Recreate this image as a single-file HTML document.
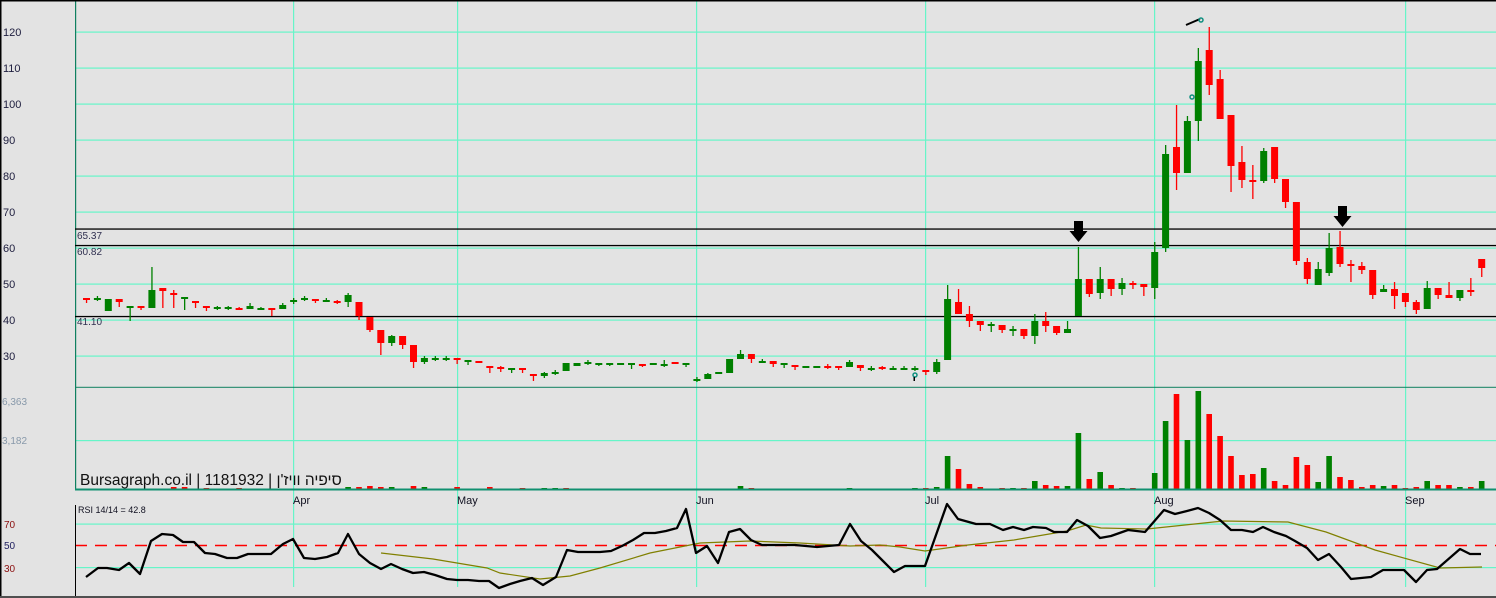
<!DOCTYPE html>
<html><head><meta charset="utf-8">
<style>
html,body{margin:0;padding:0;background:#e3e3e3;}
svg{display:block;font-family:"Liberation Sans",sans-serif;}
#ttl{position:absolute;left:80px;top:471px;font:15.5px "Liberation Sans","DejaVu Sans",sans-serif;color:#111;white-space:nowrap;line-height:20px;}
</style></head>
<body>
<div style="position:relative;width:1496px;height:598px;">
<svg id="s" width="1496" height="598" viewBox="0 0 1496 598" xmlns="http://www.w3.org/2000/svg">
<rect x="0" y="0" width="1496" height="598" fill="#e3e3e3"/>
<g id="grid"></g>
<g id="cand"></g>
<g id="vol"></g>
<g id="rsi"></g>
<g id="txt" font-size="11">
<text x="3" y="36" fill="#202040">120</text>
<text x="3" y="72" fill="#202040">110</text>
<text x="3" y="108" fill="#202040">100</text>
<text x="3" y="144" fill="#202040">90</text>
<text x="3" y="180" fill="#202040">80</text>
<text x="3" y="216" fill="#202040">70</text>
<text x="3" y="252" fill="#202040">60</text>
<text x="3" y="288" fill="#202040">50</text>
<text x="3" y="324" fill="#202040">40</text>
<text x="3" y="360" fill="#202040">30</text>
<text x="2" y="405" fill="#8899aa" font-size="10">6,363</text>
<text x="2" y="444" fill="#8899aa" font-size="10">3,182</text>
<text x="77" y="239" fill="#303050" font-size="10">65.37</text>
<text x="77" y="255" fill="#303050" font-size="10">60.82</text>
<text x="77" y="325" fill="#303050" font-size="10">41.10</text>
<text x="293" y="504" fill="#101020">Apr</text>
<text x="457" y="504" fill="#101020">May</text>
<text x="696" y="504" fill="#101020">Jun</text>
<text x="925" y="504" fill="#101020">Jul</text>
<text x="1154" y="504" fill="#101020">Aug</text>
<text x="1405" y="504" fill="#101020">Sep</text>
<text x="78" y="513" fill="#101020" font-size="9">RSI 14/14 = 42.8</text>
<text x="4" y="528" fill="#8b1010" font-size="10">70</text>
<text x="4" y="549" fill="#202060" font-size="10">50</text>
<text x="4" y="572" fill="#8b1010" font-size="10">30</text>
</g>
</svg>
<div id="ttl">Bursagraph.co.il | 1181932 | סיפיה וויז'ן</div>
</div>
<script>
var NS="http://www.w3.org/2000/svg";
function el(p,t,a){var e=document.createElementNS(NS,t);for(var k in a)e.setAttribute(k,a[k]);document.getElementById(p).appendChild(e);return e;}
var GC="#66f5c8";
for(var p=120;p>=30;p-=10){var y=32+(120-p)*3.6;el("grid","rect",{x:75,y:y-0.5,width:1421,height:1.2,fill:GC});}
el("grid","rect",{x:75,y:440,width:1421,height:1.2,fill:GC});
el("grid","rect",{x:75,y:523.5,width:1421,height:1.2,fill:GC});
el("grid","rect",{x:75,y:567,width:1421,height:1.2,fill:GC});
[293,457,696,925,1154,1405].forEach(function(x){el("grid","rect",{x:x,y:0,width:1.2,height:587,fill:GC});});
el("grid","line",{x1:75,y1:545.5,x2:1496,y2:545.5,stroke:"#ff0000","stroke-width":1.4,"stroke-dasharray":"12,8"});
el("grid","rect",{x:75,y:0,width:1.2,height:489,fill:"#108060"});
el("grid","rect",{x:75,y:386.8,width:1421,height:1,fill:"#108060"});
el("grid","rect",{x:75,y:488.5,width:1421,height:2,fill:"#109070"});
el("grid","rect",{x:75,y:505,width:1,height:92,fill:"#000"});
el("grid","rect",{x:0,y:0,width:1496,height:1.5,fill:"#000"});
el("grid","rect",{x:0,y:0,width:1.5,height:598,fill:"#000"});
el("grid","rect",{x:0,y:596,width:1496,height:2,fill:"#505050"});
[229,245.5,316.5].forEach(function(y){el("grid","rect",{x:75,y:y-0.6,width:1421,height:1.3,fill:"#000"});});
var C=[[298,300,298,303,'r'],[298,300,296,301,'g'],[299,311,299,311,'g'],[299,302,299,307,'r'],[306,307,306,321,'g'],[306,308,306,310,'r'],[290,308,267,308,'g'],[288,291,288,308,'r'],[293,294,290,308,'r'],[297,298,297,310,'g'],[301,303,301,308,'r'],[306,308,306,311,'r'],[307,308,306,310,'g'],[307,308,306,310,'g'],[308,309,307,310,'r'],[306,309,303,309,'g'],[308,309,307,309,'g'],[308,310,308,316,'r'],[305,309,303,309,'g'],[300,302,298,304,'g'],[298,299,296,301,'g'],[299,301,299,303,'r'],[300,301,298,302,'g'],[301,302,300,304,'r'],[295,302,293,307,'g'],[302,316,302,320,'r'],[317,330,317,332,'r'],[330,343,330,355,'r'],[336,343,335,346,'g'],[336,345,336,349,'r'],[345,362,345,368,'r'],[358,362,356,364,'g'],[358,359,356,361,'g'],[358,359,356,361,'g'],[358,360,358,364,'r'],[360,361,360,365,'g'],[361,363,361,363,'r'],[366,368,366,373,'r'],[367,368,366,372,'r'],[368,369,368,373,'g'],[368,369,368,373,'r'],[374,376,374,381,'r'],[373,376,372,378,'g'],[372,373,370,375,'g'],[363,371,363,371,'g'],[363,366,363,366,'g'],[362,363,360,365,'g'],[363,364,363,366,'g'],[363,364,363,366,'g'],[363,365,363,365,'g'],[363,364,363,369,'g'],[364,365,364,367,'r'],[363,365,363,365,'g'],[364,365,360,367,'g'],[362,363,362,363,'r'],[363,364,363,367,'g'],[379,380,377,382,'g'],[374,379,373,379,'g'],[372,374,372,374,'g'],[359,373,359,373,'g'],[354,359,350,359,'g'],[354,359,354,363,'r'],[361,362,359,363,'g'],[361,364,361,367,'r'],[363,364,363,368,'g'],[365,367,365,370,'r'],[366,367,366,368,'g'],[366,367,366,367,'g'],[366,367,364,369,'r'],[366,367,366,370,'r'],[362,367,360,367,'g'],[365,368,365,371,'r'],[368,369,366,371,'g'],[367,368,366,370,'r'],[368,369,366,369,'g'],[368,369,366,369,'g'],[368,369,366,371,'g'],[370,372,370,375,'r'],[362,372,359,374,'g'],[299,360,285,360,'g'],[302,314,289,314,'r'],[314,321,306,327,'r'],[321,325,321,331,'r'],[324,325,322,332,'g'],[325,330,325,333,'r'],[329,330,326,336,'g'],[329,336,329,339,'r'],[321,336,314,344,'g'],[321,326,312,332,'r'],[326,333,326,335,'r'],[329,333,321,333,'g'],[279,316,247,316,'g'],[279,294,279,297,'r'],[279,293,267,299,'g'],[279,289,279,296,'r'],[283,289,278,295,'g'],[283,284,281,289,'r'],[284,287,284,296,'r'],[252,288,242,299,'g'],[154,248,145,252,'g'],[147,173,105,190,'r'],[121,173,116,173,'g'],[61,121,48,141,'g'],[50,85,27,95,'r'],[79,119,70,119,'r'],[115,166,115,192,'r'],[162,180,146,188,'r'],[180,181,165,199,'r'],[151,181,148,183,'g'],[147,179,147,183,'r'],[179,202,179,208,'r'],[202,261,202,265,'r'],[262,279,258,284,'r'],[269,285,262,285,'g'],[248,273,233,276,'g'],[247,264,231,267,'r'],[264,266,260,282,'r'],[266,270,262,274,'r'],[270,295,270,299,'r'],[289,292,285,292,'g'],[289,296,282,309,'r'],[293,302,293,307,'r'],[302,310,300,314,'r'],[288,309,281,309,'g'],[288,295,288,299,'r'],[295,298,282,298,'r'],[290,298,290,301,'g'],[290,291,278,296,'r'],[259,268,259,277,'r']];
function cx(i){return 86.5+10.9*i;}
C.forEach(function(c,i){var x=cx(i),col=c[4]=='g'?'#008000':'#ff0000';
 el("cand","rect",{x:x-0.6,y:c[2],width:1.3,height:Math.max(1,c[3]-c[2]),fill:col});
 var h=Math.max(2,c[1]-c[0]);
 el("cand","rect",{x:x-3.5,y:c[0],width:7,height:h,fill:col});});
function arrow(x,y){el("cand","path",{d:"M"+(x-4.5)+" "+y+"h9v10h4.5l-9 11l-9-11h4.5z",fill:"#000"});}
arrow(1078.5,221);arrow(1342.5,206);
el("cand","path",{d:"M1186 25 L1193 22 L1200 19",stroke:"#000","stroke-width":2,fill:"none"});
el("cand","circle",{cx:1201,cy:20,r:2,fill:"none",stroke:"#109080","stroke-width":1.5});
el("cand","circle",{cx:1192,cy:97,r:2,fill:"none",stroke:"#109080","stroke-width":1.5});
el("cand","circle",{cx:915,cy:375,r:2,fill:"none",stroke:"#109080","stroke-width":1.5});
el("cand","rect",{x:913.5,y:377,width:1.5,height:4,fill:"#000"});
var V=[[8,487,'r'],[9,487,'r'],[11,488,'r'],[14,488,'r'],[24,487,'g'],[25,487,'r'],[26,486,'r'],[27,487,'r'],[28,487,'g'],[30,486,'r'],[31,487,'g'],[34,487,'r'],[37,487,'r'],[40,488,'r'],[42,488,'g'],[43,488,'g'],[44,488,'r'],[60,486,'g'],[61,488,'r'],[70,488,'g'],[76,488,'g'],[77,488,'r'],[78,487,'g'],[79,456,'g'],[80,469,'r'],[81,484,'r'],[82,487,'r'],[84,488,'r'],[85,488,'g'],[86,488,'r'],[87,481,'g'],[88,485,'r'],[89,486,'r'],[90,486,'g'],[91,433,'g'],[92,479,'r'],[93,472,'g'],[94,485,'r'],[95,488,'g'],[96,488,'r'],[98,473,'g'],[99,421,'g'],[100,394,'r'],[101,440,'g'],[102,391,'g'],[103,414,'r'],[104,436,'r'],[105,456,'r'],[106,475,'r'],[107,474,'r'],[108,468,'g'],[109,481,'r'],[110,485,'r'],[111,457,'r'],[112,465,'r'],[113,482,'g'],[114,456,'g'],[115,477,'r'],[116,480,'r'],[117,487,'r'],[118,485,'r'],[119,486,'g'],[120,485,'r'],[121,488,'r'],[122,487,'r'],[123,481,'g'],[124,485,'r'],[125,485,'r'],[126,487,'g'],[127,487,'r'],[128,481,'g']];
V.forEach(function(v){el("vol","rect",{x:cx(v[0])-2.8,y:v[1],width:5.6,height:488.5-v[1],fill:v[2]=='g'?'#008000':'#ff0000'});});
var R=[[86,577],[98,568],[107,568],[119,570],[129,563],[140,574],[151,541],[162,534],[173,535],[183,542],[194,542],[205,553],[215,554],[227,558],[237,558],[248,554],[259,554],[271,554],[283,544],[293,539],[304,558],[315,559],[327,557],[338,553],[348,534],[359,554],[370,563],[381,569],[391,564],[402,569],[413,573],[424,572],[435,575],[447,579],[457,580],[468,580],[479,581],[489,581],[499,588],[510,584],[520,581],[532,578],[543,585],[556,577],[567,550],[578,552],[589,552],[600,552],[611,551],[622,546],[633,540],[644,533],[655,533],[666,531],[677,528],[686,509],[696,553],[707,546],[718,563],[729,532],[740,529],[751,540],[762,545],[773,545],[795,545],[817,547],[839,545],[850,524],[861,541],[872,550],[883,561],[894,572],[905,566],[916,566],[925,566],[947,504],[958,519],[976,524],[990,524],[1003,530],[1013,527],[1024,530],[1033,527],[1046,528],[1054,532],[1067,532],[1077,520],[1088,526],[1100,538],[1111,536],[1128,530],[1145,532],[1164,510],[1175,514],[1187,511],[1198,508],[1209,513],[1220,520],[1231,530],[1242,530],[1253,532],[1263,527],[1274,532],[1286,536],[1295,541],[1307,548],[1318,560],[1329,554],[1341,567],[1351,579],[1371,577],[1383,570],[1404,570],[1416,582],[1427,570],[1437,569],[1460,549],[1470,554],[1481,554]];
var M=[[381,553],[433,559],[487,568],[500,573],[540,579],[570,576],[600,568],[650,553],[700,543],[750,541],[800,543],[850,546],[880,545],[900,547],[925,551],[968,545],[1014,540],[1067,531],[1086,525],[1101,528],[1147,529],[1223,521],[1288,522],[1326,532],[1375,550],[1440,568],[1482,567]];
function pts(a){return a.map(function(p){return p[0]+","+p[1];}).join(" ");}
el("rsi","polyline",{points:pts(M),fill:"none",stroke:"#808000","stroke-width":1.2});
el("rsi","polyline",{points:pts(R),fill:"none",stroke:"#000","stroke-width":2.3,"stroke-linejoin":"round"});
</script>
</body></html>
